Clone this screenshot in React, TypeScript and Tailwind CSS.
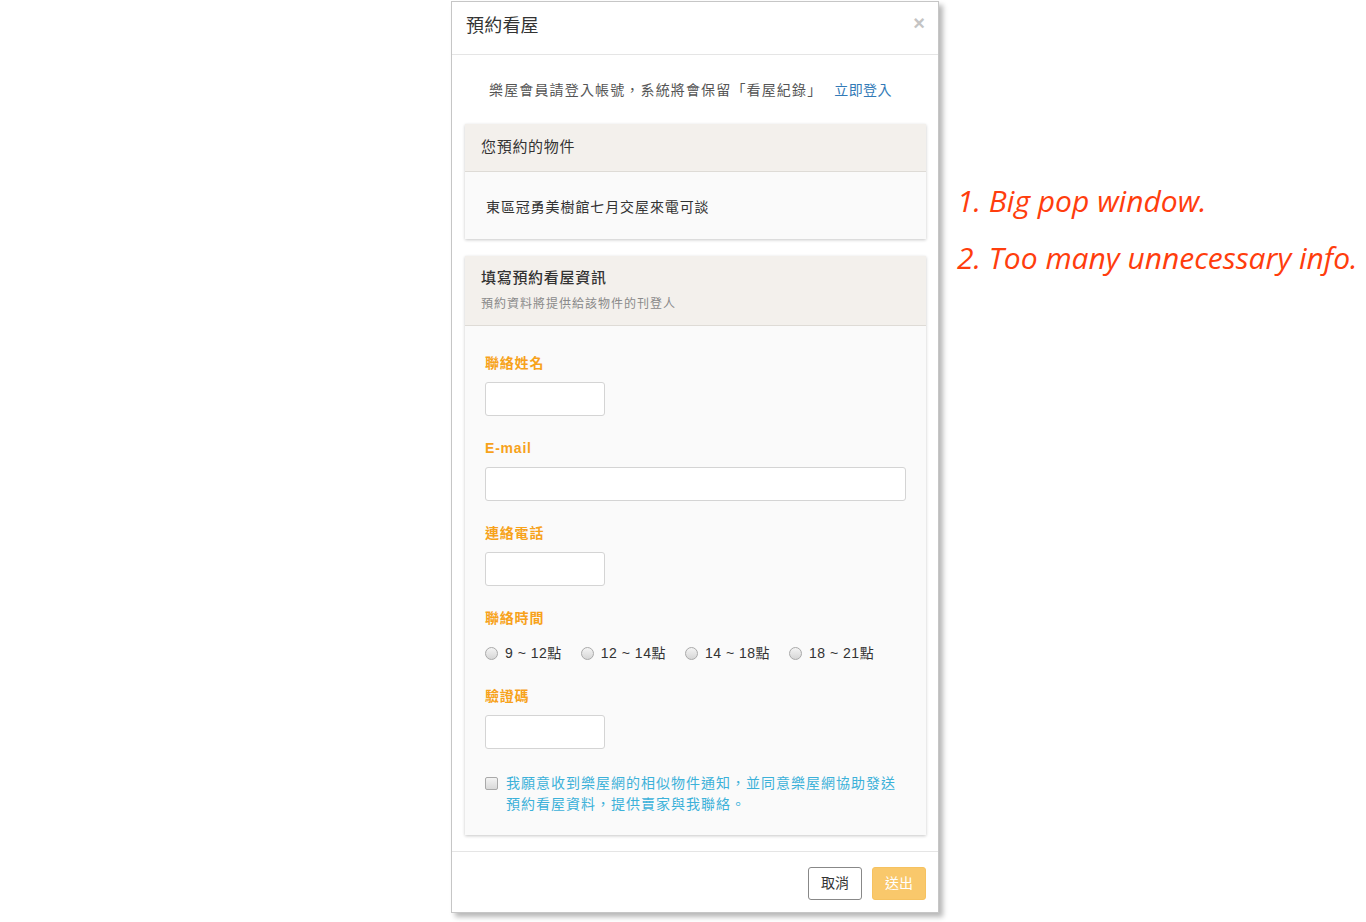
import { useState } from "react";

const FONT = "font-['Liberation_Sans','Noto_Sans_CJK_TC',sans-serif]";

const TIMES = ["9 ~ 12點", "12 ~ 14點", "14 ~ 18點", "18 ~ 21點"];

function Field({ label, wide }: { label: string; wide?: boolean }) {
  return (
    <div>
      <p className="text-[14px] leading-[20px] font-bold tracking-[0.8px] text-[#f7a21b]">{label}</p>
      <input
        className={`mt-[9px] block h-[34px] rounded-[3px] border border-[#d4d4d4] bg-white ${wide ? "w-[421px]" : "w-[120px]"}`}
      />
    </div>
  );
}

function Radio() {
  return (
    <span className="block w-[13px] h-[13px] rounded-full border border-[#a9a9a9] bg-gradient-to-b from-[#f4f4f4] to-[#d6d6d6] shrink-0" />
  );
}

export default function App() {
  const [agree, setAgree] = useState(false);

  return (
    <div className={`min-h-screen bg-white flex items-start ${FONT}`}>
      {/* ── Modal ─────────────────────────────── */}
      <div className="ml-[451px] mt-px w-[488px] h-[912px] border border-[#c6c6c6] bg-white shadow-[4px_4px_5px_rgba(0,0,0,0.28)] flex flex-col shrink-0">
        {/* Header */}
        <div className="h-[53px] border-b border-[#e5e5e5] flex items-center justify-between pl-[14px] pr-[13px]">
          <h1 className="text-[18px] leading-none text-[#333] tracking-[0.2px] -mt-[4px]">預約看屋</h1>
          <span className="text-[20px] font-bold leading-none text-[#c4c4c4] -mt-[10px]">×</span>
        </div>

        {/* Body */}
        <div className="flex-1 px-[13px] pr-[12px]">
          <p className="h-[69px] pt-[25px] pl-[24px] text-[14px] leading-[20px] tracking-[1.15px] text-[#555]">
            樂屋會員請登入帳號，系統將會保留「看屋紀錄」
            <a className="ml-[12px] text-[#337ab7] tracking-[0.4px]">立即登入</a>
          </p>

          {/* Panel: property */}
          <section className="shadow-[0_1px_3px_rgba(0,0,0,0.22)]">
            <div className="h-[48px] bg-[#f3f0ec] border-b border-[#dedbd6] pl-[16px] flex items-center">
              <h2 className="text-[15px] tracking-[0.7px] text-[#333]">您預約的物件</h2>
            </div>
            <div className="h-[67px] bg-[#fafafa] pl-[21px] flex items-center">
              <p className="text-[14px] tracking-[0.9px] text-[#333] mt-[3px]">東區冠勇美樹館七月交屋來電可談</p>
            </div>
          </section>

          {/* Panel: form */}
          <section className="mt-[17px] shadow-[0_1px_3px_rgba(0,0,0,0.22)]">
            <div className="h-[70px] bg-[#f3f0ec] border-b border-[#dedbd6] pl-[16px] pt-[12px]">
              <h2 className="text-[15px] leading-[20px] font-medium tracking-[0.7px] text-[#333]">填寫預約看屋資訊</h2>
              <p className="mt-[8px] text-[12px] leading-[16px] tracking-[1px] text-[#8a8a8a]">預約資料將提供給該物件的刊登人</p>
            </div>
            <div className="bg-[#fafafa] pl-[20px] pt-[27px] pb-[20px] flex flex-col gap-[22px]">
              <Field label="聯絡姓名" />
              <Field label="E-mail" wide />
              <Field label="連絡電話" />
              <div>
                <p className="text-[14px] leading-[20px] font-bold tracking-[0.8px] text-[#f7a21b]">聯絡時間</p>
                <div className="mt-[15px] flex items-center gap-[19px] text-[14px] leading-[20px] tracking-[0.5px] text-[#333]">
                  {TIMES.map((t) => (
                    <label key={t} className="flex items-center gap-[7px]">
                      <Radio />
                      <span>{t}</span>
                    </label>
                  ))}
                </div>
              </div>
              <div className="mt-px">
                <Field label="驗證碼" />
              </div>
              <label className="flex items-start gap-[8px] mt-[2px]" onClick={() => setAgree(!agree)}>
                <span className={`mt-[4px] block w-[13px] h-[13px] rounded-[2px] border border-[#a9a9a9] shrink-0 ${agree ? "bg-[#5aa0e0]" : "bg-gradient-to-b from-[#f4f4f4] to-[#d9d9d9]"}`} />
                <span className="w-[395px] text-[14px] leading-[21px] tracking-[1px] text-[#3cb1d9]">
                  我願意收到樂屋網的相似物件通知，並同意樂屋網協助發送預約看屋資料，提供賣家與我聯絡。
                </span>
              </label>
            </div>
          </section>
        </div>

        {/* Footer */}
        <div className="h-[61px] border-t border-[#e5e5e5] flex items-start justify-end gap-[10px] pt-[15px] pr-[12px]">
          <button className="h-[33px] w-[54px] rounded-[3px] border border-[#888] bg-white text-[14px] text-[#333]">取消</button>
          <button className="h-[33px] w-[54px] rounded-[3px] border border-[#f6c260] bg-[#f9c86b] text-[14px] text-white">送出</button>
        </div>
      </div>

      {/* ── Annotations ───────────────────────── */}
      <div className="ml-[18px] mt-[172px] font-['Open_Sans',sans-serif] italic text-[30px] leading-[57px] text-[#ff3d0d] whitespace-nowrap">
        <p>1. Big pop window.</p>
        <p>2. Too many unnecessary info.</p>
      </div>
    </div>
  );
}
